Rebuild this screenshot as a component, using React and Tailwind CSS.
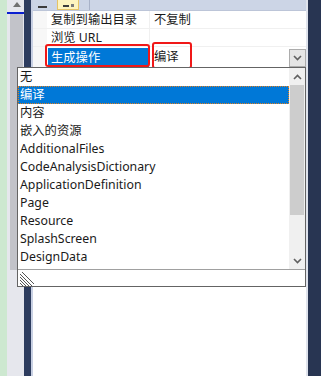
import React from 'react';

const font = { fontFamily: '"Noto Sans", "Noto Sans CJK SC", sans-serif' };

const items = [
    '无',
    '编译',
    '内容',
    '嵌入的资源',
    'AdditionalFiles',
    'CodeAnalysisDictionary',
    'ApplicationDefinition',
    'Page',
    'Resource',
    'SplashScreen',
    'DesignData',
];

const Chevron = ({ up = false }) => (
    <svg width="9" height="6" viewBox="0 0 9 6" className={up ? '' : 'rotate-180'}>
        <path d="M1 5 L4.5 1.5 L8 5" fill="none" stroke="#606060" strokeWidth="1.6" />
    </svg>
);

const Grip = () => (
    <svg width="14" height="14" viewBox="0 0 14 14">
        <path d="M0 2 L12 14 M0 5 L9 14 M0 8 L6 14 M0 11 L3 14 M2 0 L14 12" stroke="#555" strokeWidth="1" fill="none" />
    </svg>
);

const App = () => {
    return (
        <div className="relative w-[321px] h-[376px] overflow-hidden flex bg-white text-[12.3px] text-[#1a1a1a]" style={font}>
            {/* far left strip */}
            <div className="w-[7px] bg-[#cde8d0]" />

            {/* side panel with scrollbar */}
            <div className="w-[17px] bg-[#e6e7ed] flex flex-col">
                <div className="h-[12px] flex items-start justify-center pt-[2px] pl-[2px]">
                    <svg width="8" height="5" viewBox="0 0 8 5">
                        <path d="M0 5 L4 0 L8 5 Z" fill="#717171" />
                    </svg>
                </div>
                <div className="h-[2px] bg-[#0a1fd0]" />
                <div className="ml-[3px] w-[13px] h-[256px] bg-[#c2c3c9]" />
            </div>

            <div className="w-[7px] bg-[#2d3c5e]" />
            <div className="w-[2px] bg-[#c8d0e3]" />

            {/* property grid */}
            <div className="w-[273px] flex flex-col">
                <div className="h-[11px] bg-[#ccd5e6] flex items-end gap-[10px] pl-[5px] border-b border-[#bcc5d8]">
                    <div className="w-[9px] h-[5px] mb-[2px] border-b-2 border-[#3c3c3c]" />
                    <div className="w-[22px] h-[10px] bg-[#fdf4bf] border border-[#e5c365] border-t-0 flex items-end justify-center gap-[2px] pb-[2px]">
                        <div className="w-[6px] h-[3px] border-b-2 border-[#3c3c3c]" />
                        <div className="w-[3px] h-[3px] bg-[#7a7a7a]" />
                    </div>
                    <div className="w-px h-[10px] bg-[#a8b2c8]" />
                </div>

                <div className="flex h-[18px] border-b border-[#f0f0f0]">
                    <div className="w-[14px] bg-[#f7f7f7]" />
                    <div className="w-[102px] pl-[4px] pt-[1px] flex items-center">复制到输出目录</div>
                    <div className="w-px bg-[#f0f0f0]" />
                    <div className="flex-1 pl-[4px] pt-[1px] flex items-center">不复制</div>
                </div>
                <div className="flex h-[18px] border-b border-[#f0f0f0]">
                    <div className="w-[14px] bg-[#f7f7f7]" />
                    <div className="w-[102px] pl-[4px] pt-[1px] flex items-center">浏览 URL</div>
                    <div className="w-px bg-[#f0f0f0]" />
                    <div className="flex-1" />
                </div>
                <div className="flex h-[20px]">
                    <div className="w-[14px] bg-[#f7f7f7]" />
                    <div className="w-[102px] pl-[1px] pt-[1px] flex">
                        <div className="flex-1 bg-[#0078d7] text-white pl-[3px] pt-[1px] flex items-center">生成操作</div>
                    </div>
                    <div className="w-px bg-[#f0f0f0]" />
                    <div className="flex-1 pl-[4px] pt-[1px] flex items-center justify-between">
                        <span>编译</span>
                        <div className="w-[17px] h-[18px] bg-[#e5e5e5] border border-[#acacac] flex items-center justify-center">
                            <Chevron />
                        </div>
                    </div>
                </div>
                <div className="flex-1" />
            </div>

            <div className="w-[2px] bg-[#dfe3ec]" />
            <div className="flex-1 bg-[#283552]" />

            {/* red annotation boxes */}
            <div className="absolute left-[45px] top-[44px] w-[105px] h-[23px] border-[2.5px] border-[#f01818] rounded-[3px]" />
            <div className="absolute left-[152px] top-[42px] w-[40px] h-[27px] border-[2.5px] border-[#f01818] rounded-[3px]" />

            {/* dropdown list */}
            <div className="absolute left-[17px] top-[67px] w-[289px] h-[220px] border border-[#646464] bg-white flex flex-col">
                <div className="flex h-[201px]">
                    <div className="flex-1 flex flex-col overflow-hidden">
                        {items.map((item, i) => (
                            <div
                                key={item}
                                className={`h-[18px] shrink-0 pl-[2px] pt-[1px] flex items-center ${i === 1
                                    ? 'bg-[#0078d7] text-white outline-1 outline-dotted outline-[#e08020] -outline-offset-1'
                                    : ''
                                    }`}
                            >
                                {item}
                            </div>
                        ))}
                    </div>
                    <div className="w-[16px] bg-[#f0f0f0] flex flex-col">
                        <div className="h-[17px] flex items-center justify-center">
                            <Chevron up />
                        </div>
                        <div className="h-[130px] mx-[1px] bg-[#cdcdcd]" />
                        <div className="flex-1" />
                        <div className="h-[17px] flex items-center justify-center">
                            <Chevron />
                        </div>
                    </div>
                </div>
                <div className="h-px bg-[#a0a0a0]" />
                <div className="flex-1 flex items-end pl-[2px]">
                    <Grip />
                </div>
            </div>
        </div>
    );
};

export default App;
